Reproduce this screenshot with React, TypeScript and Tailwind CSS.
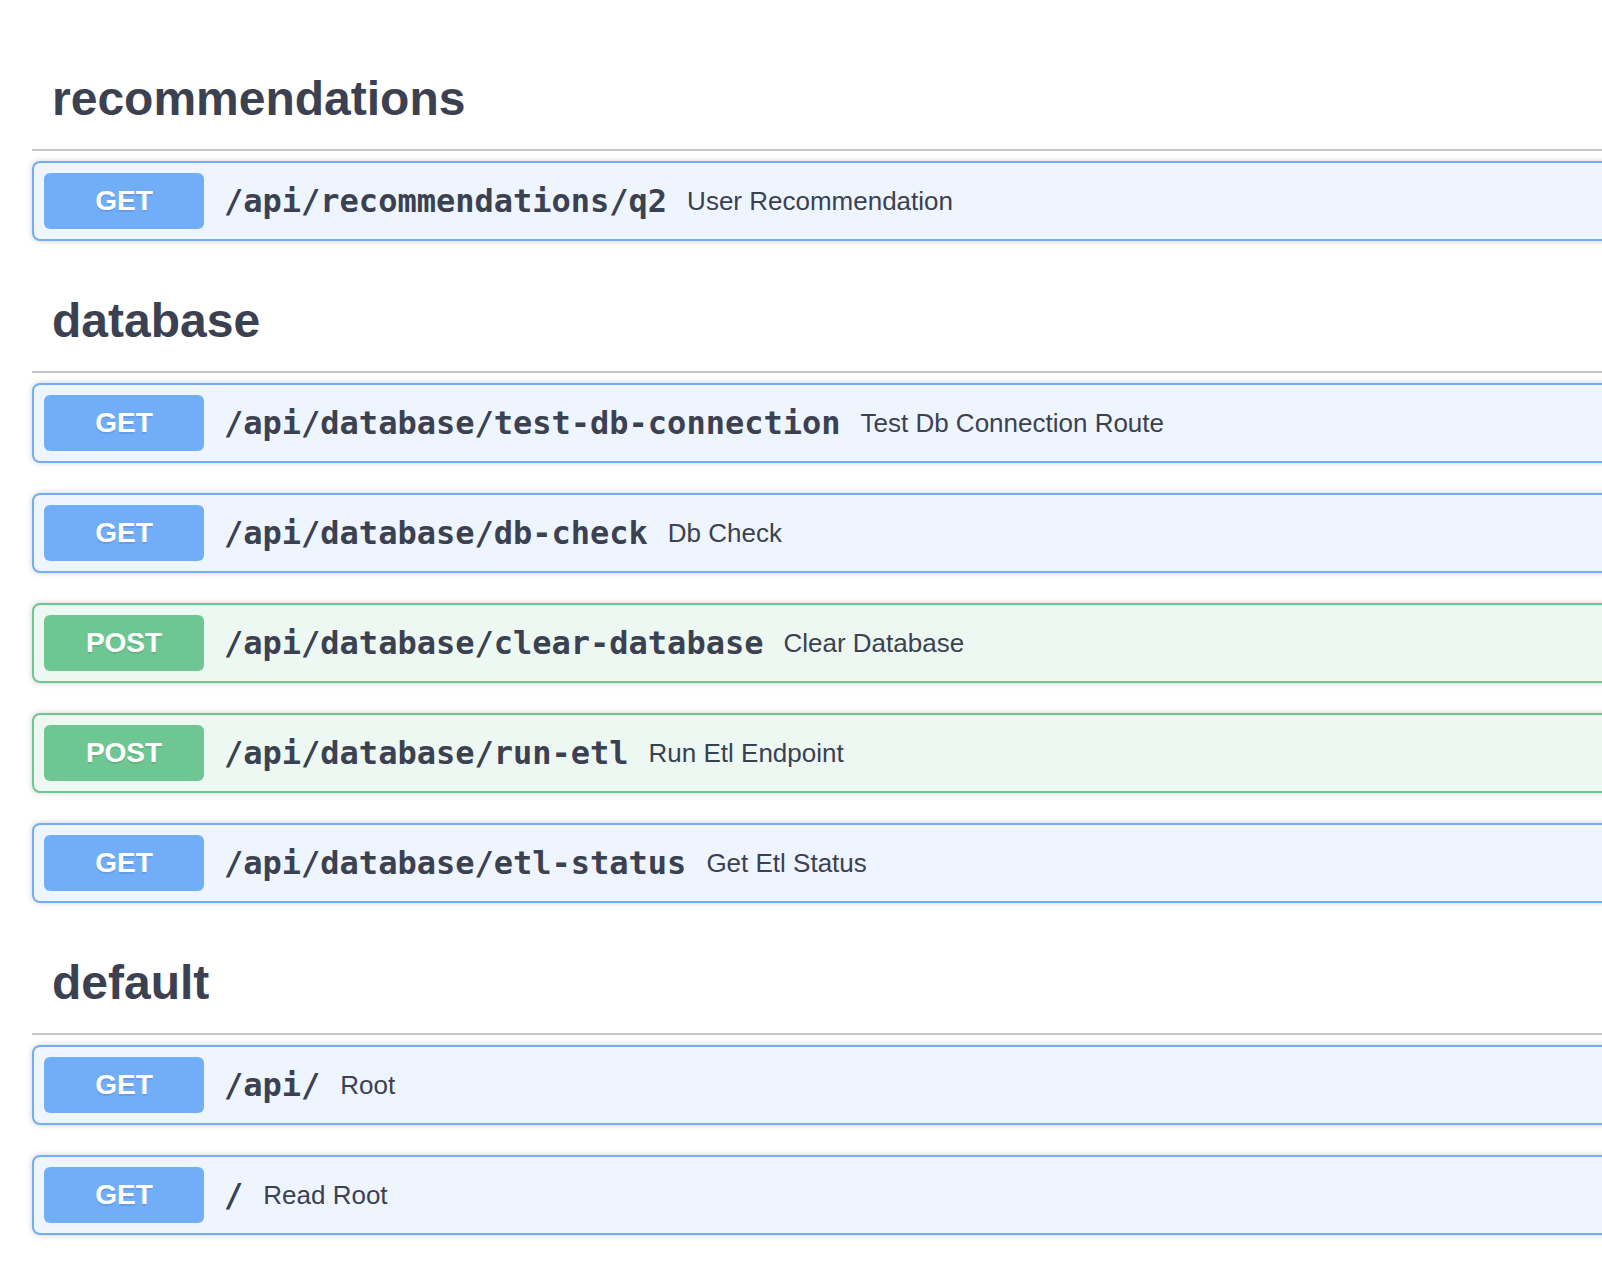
type Op = {
    method: "GET" | "POST";
    path: string;
    summary: string;
};

type Tag = {
    name: string;
    ops: Op[];
};

const tags: Tag[] = [
    {
        name: "recommendations",
        ops: [{ method: "GET", path: "/api/recommendations/q2", summary: "User Recommendation" }],
    },
    {
        name: "database",
        ops: [
            { method: "GET", path: "/api/database/test-db-connection", summary: "Test Db Connection Route" },
            { method: "GET", path: "/api/database/db-check", summary: "Db Check" },
            { method: "POST", path: "/api/database/clear-database", summary: "Clear Database" },
            { method: "POST", path: "/api/database/run-etl", summary: "Run Etl Endpoint" },
            { method: "GET", path: "/api/database/etl-status", summary: "Get Etl Status" },
        ],
    },
    {
        name: "default",
        ops: [
            { method: "GET", path: "/api/", summary: "Root" },
            { method: "GET", path: "/", summary: "Read Root" },
        ],
    },
];

const OpBlock = ({ op }: { op: Op }) => {
    const isGet = op.method === "GET";

    return (
        <div
            className={
                isGet
                    ? "mb-[30px] rounded-[8px] border-2 border-[#72aef8] bg-[#eef5fe] shadow-[0_0_6px_rgba(0,0,0,0.19)]"
                    : "mb-[30px] rounded-[8px] border-2 border-[#6ec793] bg-[#eef8f3] shadow-[0_0_6px_rgba(0,0,0,0.19)]"
            }
        >
            <div className="flex items-center p-[10px]">
                <span
                    className={
                        isGet
                            ? "min-w-[160px] rounded-[6px] bg-[#72aef8] py-[12px] text-center text-[28px] leading-[32px] font-bold text-white [text-shadow:0_2px_0_rgba(0,0,0,0.1)]"
                            : "min-w-[160px] rounded-[6px] bg-[#6ec793] py-[12px] text-center text-[28px] leading-[32px] font-bold text-white [text-shadow:0_2px_0_rgba(0,0,0,0.1)]"
                    }
                >
                    {op.method}
                </span>
                <span className="px-[20px] font-['DejaVu_Sans_Mono',monospace] text-[32px] leading-[40px] font-bold text-[#3b4151]">
                    {op.path}
                </span>
                <span className="text-[26px] leading-[32px] text-[#3b4151]">{op.summary}</span>
            </div>
        </div>
    );
};

export default function App() {
    return (
        <div className="min-h-screen w-full overflow-hidden bg-white pt-[49px] pl-[32px] font-['Liberation_Sans',Arial,sans-serif]">
            <div className="w-[1620px]">
                {tags.map((tag) => (
                    <section key={tag.name}>
                        <h3 className="mb-[10px] flex items-center border-b-2 border-[#c5c6ca] py-[20px] pl-[20px] text-[48px] leading-[60px] font-bold text-[#3b4151]">
                            {tag.name}
                        </h3>
                        {tag.ops.map((op) => (
                            <OpBlock key={op.method + op.path} op={op} />
                        ))}
                    </section>
                ))}
            </div>
        </div>
    );
}
